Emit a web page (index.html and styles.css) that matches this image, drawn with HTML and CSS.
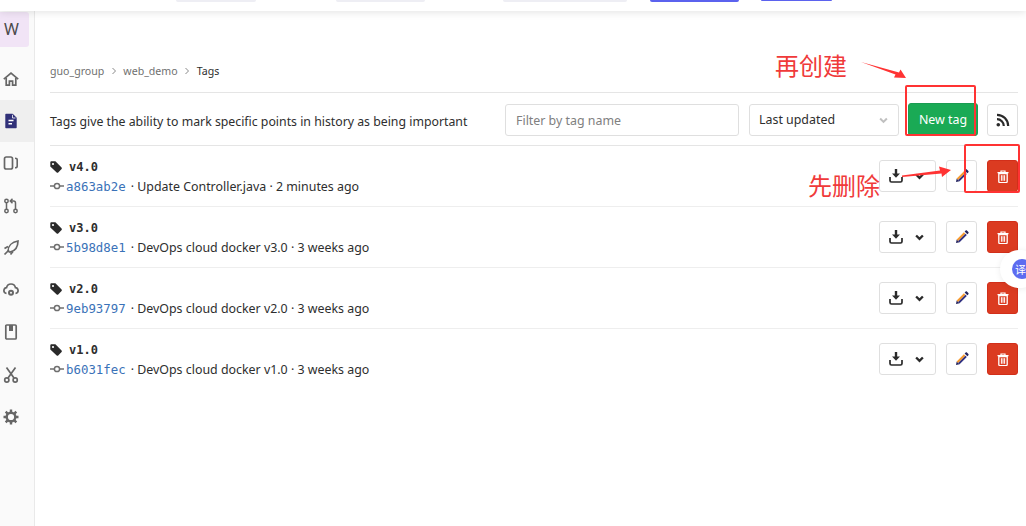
FILE: index.html
```html
<!DOCTYPE html>
<html lang="en">
<head>
<meta charset="utf-8">
<title>Tags</title>
<link rel="stylesheet" href="styles.css">
</head>
<body>
<svg width="0" height="0" class="defs">
  <symbol id="tag" viewBox="0 0 12 12"><path d="M0.300 1.500c0-.7.500-1.200 1.200-1.200h3.900l6.200 6.200c.4.400.4 1.100 0 1.500l-3.400 3.400c-.4.400-1.100.4-1.500 0L.300 5.400z" fill="#2a2a2a"/><circle cx="3" cy="3" r="1.100" fill="#fff"/></symbol>
  <symbol id="commit" viewBox="0 0 14 8"><path d="M0 4h14" stroke="#6f6f6f" stroke-width="1.500"/><circle cx="7" cy="4" r="2.600" fill="#fff" stroke="#6f6f6f" stroke-width="1.500"/></symbol>
  <symbol id="download" viewBox="0 0 14 14"><path d="M7 0v7" stroke="#2a2a2a" stroke-width="2.400" fill="none"/><path d="M3 4.500h8L7 8.800z" fill="#2a2a2a"/><path d="M1 8v3.500c0 1 .5 1.500 1.500 1.500h9c1 0 1.500-.5 1.500-1.500V8" fill="none" stroke="#2a2a2a" stroke-width="1.700"/></symbol>
  <symbol id="chev" viewBox="0 0 8 6"><path d="M1 1.200l3 3 3-3" fill="none" stroke="#2a2a2a" stroke-width="2.100"/></symbol>
  <symbol id="pencil" viewBox="0 0 14 14"><path d="M1 13l.7-3.600 2.900 2.900z" fill="#24245e"/><path d="M1.700 9.400L8.900 2.200l1.500 1.500-7.200 7.200z" fill="#f79a2e"/><path d="M3.200 10.900L10.400 3.700l1.400 1.400-7.200 7.200z" fill="#2f2f80"/><path d="M9.600 1.500l1.100-1c.4-.3.900-.3 1.200 0l1.500 1.500c.3.300.3.800 0 1.200l-1 1.100z" fill="#24245e"/></symbol>
  <symbol id="trash" viewBox="0 0 12 13"><path d="M0.500 2.600h11M4 2.400V1h4v1.400" fill="none" stroke="#fff" stroke-width="1.200"/><path d="M1.800 3.600h8.400v8c0 .6-.4 1-1 1H2.800c-.6 0-1-.4-1-1z" fill="none" stroke="#fff" stroke-width="1.300"/><path d="M4.400 5.200v5.600M6 5.200v5.600M7.600 5.200v5.600" stroke="#fff" stroke-width="1"/></symbol>
</svg>

<header class="topbar">
  <span class="ghost g1"></span><span class="ghost g2"></span><span class="ghost g3"></span>
  <span class="ghost blue b1"></span><span class="ghost blue b2"></span>
</header>

<div class="shell">
  <nav class="sidebar">
    <div class="tile">W</div>
    <a class="item"><svg viewBox="0 0 16 16"><path d="M.8 8.200L8 2l7.200 6.200" fill="none" stroke="#666" stroke-width="1.700"/><path d="M3.200 7v7.200h3.200v-4h3.200v4h3.200V7" fill="none" stroke="#666" stroke-width="1.700"/></svg></a>
    <a class="item active"><svg viewBox="0 0 16 16"><path d="M3 1.500h6.500L13 5v9.500H3z" fill="#303078" stroke="#303078" stroke-width="1.400" stroke-linejoin="round"/><path d="M5.500 7.500h5M5.500 10.800h3.500" stroke="#fff" stroke-width="1.400"/><path d="M9.500 1.800v3.200h3" stroke="#fff" stroke-width=".8" fill="none"/></svg></a>
    <a class="item"><svg viewBox="0 0 16 16"><rect x="1.500" y="2" width="8" height="12" rx="1.800" fill="none" stroke="#666" stroke-width="1.700"/><path d="M12 3.200c1.300 0 2.200.5 2.200 1.500v6.600c0 1-.9 1.500-2.200 1.500" fill="none" stroke="#666" stroke-width="1.600"/></svg></a>
    <a class="item"><svg viewBox="0 0 16 16"><circle cx="3.500" cy="3" r="1.700" fill="none" stroke="#666" stroke-width="1.500"/><circle cx="3.500" cy="13" r="1.700" fill="none" stroke="#666" stroke-width="1.500"/><circle cx="12.500" cy="13" r="1.700" fill="none" stroke="#666" stroke-width="1.500"/><path d="M3.500 4.700v6.600M12.500 11.300V5c0-1-.5-2-2-2H8m1.500-2.200L7.300 3l2.200 2.200" fill="none" stroke="#666" stroke-width="1.500"/></svg></a>
    <a class="item"><svg viewBox="0 0 16 16"><path d="M5 11.200C5 6 9 2 15 1c0 6-3 10-8 11.200z" fill="none" stroke="#666" stroke-width="1.700"/><path d="M1.500 8.500L5 6.500M7.500 14.500l2.500-3M1.500 14.500L6 10" stroke="#666" stroke-width="1.700"/></svg></a>
    <a class="item"><svg viewBox="0 0 16 16"><path d="M3.500 11.500C1.500 11 .7 9.500 1 8c.3-1.500 1.500-2.300 2.500-2.300C4 3.500 6 2 8 2s4 1.500 4.500 3.700c1 0 2.200.8 2.500 2.300.3 1.500-.5 3-2.500 3.500" fill="none" stroke="#666" stroke-width="1.700"/><circle cx="8" cy="10.800" r="3" fill="#666"/><circle cx="8" cy="10.800" r="1" fill="#fafafa"/></svg></a>
    <a class="item"><svg viewBox="0 0 16 16"><rect x="2.800" y="1" width="10.400" height="14" rx="1" fill="none" stroke="#666" stroke-width="1.700"/><path d="M6 1h4v6H6z" fill="#666"/></svg></a>
    <a class="item"><svg viewBox="0 0 16 16"><path d="M3.500 .5l7.500 10.500M12.500 .5L5 11" stroke="#666" stroke-width="1.700"/><circle cx="3.800" cy="13" r="2.100" fill="none" stroke="#666" stroke-width="1.700"/><circle cx="12.200" cy="13" r="2.100" fill="none" stroke="#666" stroke-width="1.700"/></svg></a>
    <a class="item"><svg viewBox="0 0 16 16"><circle cx="8" cy="8" r="4.300" fill="none" stroke="#666" stroke-width="2.400"/><path d="M8 .5v3M8 12.500v3M.5 8h3M12.500 8h3M2.700 2.700l2.100 2.100M11.200 11.200l2.100 2.100M2.700 13.300l2.100-2.100M11.200 4.800l2.100-2.100" stroke="#666" stroke-width="2.400"/></svg></a>
  </nav>

  <main class="content">
    <div class="crumbs">
      <a>guo_group</a><svg class="sep" viewBox="0 0 6 8"><path d="M1.500 1l3 3-3 3" fill="none" stroke="#8a8a8a"/></svg>
      <a>web_demo</a><svg class="sep" viewBox="0 0 6 8"><path d="M1.500 1l3 3-3 3" fill="none" stroke="#8a8a8a"/></svg>
      <b>Tags</b>
    </div>

    <div class="toolbar">
      <p class="intro">Tags give the ability to mark specific points in history as being important</p>
      <div class="filter">Filter by tag name</div>
      <div class="sort"><span>Last updated</span><svg class="sortchev" viewBox="0 0 8 6"><path d="M1 1.200l3 3 3-3" fill="none" stroke="#c0c0c0" stroke-width="1.800"/></svg></div>
      <button class="new">New tag</button>
      <button class="btn rss"><svg viewBox="0 0 14 14"><circle cx="2.300" cy="11.700" r="1.800" fill="#2a2a2a"/><path d="M1 6.200a6.800 6.800 0 0 1 6.800 6.800M1 1.800A11.200 11.200 0 0 1 12.200 13" fill="none" stroke="#2a2a2a" stroke-width="2.200"/></svg></button>
    </div>

    <ul class="tags">
      <li class="row">
        <div class="info">
          <div class="name"><svg class="tagicon"><use href="#tag"/></svg><b>v4.0</b></div>
          <div class="meta"><svg class="commit"><use href="#commit"/></svg><a>a863ab2e</a><span>· Update Controller.java · 2 minutes ago</span></div>
        </div>
        <div class="actions">
          <button class="btn dl"><svg class="i14"><use href="#download"/></svg><svg class="i8"><use href="#chev"/></svg></button>
          <button class="btn edit"><svg class="i14"><use href="#pencil"/></svg></button>
          <button class="btn del"><svg class="i13"><use href="#trash"/></svg></button>
        </div>
      </li>
      <li class="row">
        <div class="info">
          <div class="name"><svg class="tagicon"><use href="#tag"/></svg><b>v3.0</b></div>
          <div class="meta"><svg class="commit"><use href="#commit"/></svg><a>5b98d8e1</a><span>· DevOps cloud docker v3.0 · 3 weeks ago</span></div>
        </div>
        <div class="actions">
          <button class="btn dl"><svg class="i14"><use href="#download"/></svg><svg class="i8"><use href="#chev"/></svg></button>
          <button class="btn edit"><svg class="i14"><use href="#pencil"/></svg></button>
          <button class="btn del"><svg class="i13"><use href="#trash"/></svg></button>
        </div>
      </li>
      <li class="row">
        <div class="info">
          <div class="name"><svg class="tagicon"><use href="#tag"/></svg><b>v2.0</b></div>
          <div class="meta"><svg class="commit"><use href="#commit"/></svg><a>9eb93797</a><span>· DevOps cloud docker v2.0 · 3 weeks ago</span></div>
        </div>
        <div class="actions">
          <button class="btn dl"><svg class="i14"><use href="#download"/></svg><svg class="i8"><use href="#chev"/></svg></button>
          <button class="btn edit"><svg class="i14"><use href="#pencil"/></svg></button>
          <button class="btn del"><svg class="i13"><use href="#trash"/></svg></button>
        </div>
      </li>
      <li class="row last">
        <div class="info">
          <div class="name"><svg class="tagicon"><use href="#tag"/></svg><b>v1.0</b></div>
          <div class="meta"><svg class="commit"><use href="#commit"/></svg><a>b6031fec</a><span>· DevOps cloud docker v1.0 · 3 weeks ago</span></div>
        </div>
        <div class="actions">
          <button class="btn dl"><svg class="i14"><use href="#download"/></svg><svg class="i8"><use href="#chev"/></svg></button>
          <button class="btn edit"><svg class="i14"><use href="#pencil"/></svg></button>
          <button class="btn del"><svg class="i13"><use href="#trash"/></svg></button>
        </div>
      </li>
    </ul>
  </main>
</div>

<div class="note note-create">再创建</div>
<div class="note note-delete">先删除</div>
<div class="redbox box-create"></div>
<div class="redbox box-delete"></div>
<svg class="arrows" viewBox="0 0 1026 526">
  <path d="M861 62L899 72.500 900.500 69.500 906 78 894 77.500 895.500 74.500z" fill="#f33"/>
  <path d="M902 175.500L940 170.500 939 166.500 951 170 942 177 941.500 173.500 902 177z" fill="#f33"/>
</svg>
<div class="translate"><span class="bubble">译</span></div>
</body>
</html>
```

FILE: styles.css
```css
* { box-sizing: border-box; }
html, body { margin: 0; height: 100%; overflow: hidden; }
body {
  position: relative;
  background: #fff;
  color: #2e2e2e;
  font-family: "Noto Sans", "Noto Sans CJK SC", sans-serif;
  font-size: 12px;
}
.defs { position: absolute; }
.topbar {
  height: 11px;
  background: #fff;
  box-shadow: 0 1px 8px rgba(0, 0, 0, .12);
  position: relative;
  z-index: 2;
  display: flex;
  align-items: flex-start;
}
.ghost { height: 2px; background: #eeeef4; border-radius: 0 0 4px 4px; flex: none; }
.g1 { width: 80px; margin-left: 176px; }
.g2 { width: 89px; margin-left: 80px; }
.g3 { width: 124px; margin-left: 78px; }
.blue { background: #5b62ee; }
.b1 { width: 89px; margin-left: 23px; }
.b2 { width: 71px; margin-left: 22px; height: 1px; }

.shell { display: flex; height: 515px; }
.sidebar {
  width: 35px;
  flex: none;
  background: #fafafa;
  border-right: 1px solid #e9e9e9;
  padding-top: 1px;
}
.tile {
  width: 29px;
  height: 35px;
  background: #f1e4f6;
  border-radius: 0 3px 3px 0;
  color: #4a4a4a;
  font-size: 16px;
  line-height: 34px;
  text-align: center;
  padding-right: 6px;
  margin-bottom: 10.500px;
}
.item { display: flex; height: 42.3px; width: 34px; padding-right: 12px; align-items: center; justify-content: center; }
.item svg { width: 16px; height: 16px; }
.active { background: #efefef; }

.content { flex: 1; min-width: 0; padding: 0 8px 0 15px; }
.crumbs {
  display: flex;
  align-items: center;
  height: 82px;
  padding-top: 38px;
  border-bottom: 1px solid #e5e5e5;
  font-size: 10.6px;
  color: #707070;
}
.crumbs b { font-weight: 400; color: #2e2e2e; }
.sep { width: 6px; height: 8px; margin: 0 6.500px; }
.toolbar {
  display: flex;
  align-items: center;
  height: 53px;
  border-bottom: 1px solid #e5e5e5;
  padding-top: 1px;
}
.intro { margin: 4px 0 0; flex: 1; font-size: 12.3px; }
.filter {
  width: 234px;
  height: 32px;
  border: 1px solid #dfdfdf;
  border-radius: 3px;
  padding-left: 10px;
  line-height: 31px;
  color: #808080;
  font-size: 12.4px;
}
.sort {
  width: 150px;
  height: 32px;
  margin-left: 10px;
  border: 1px solid #dfdfdf;
  border-radius: 3px;
  padding: 0 10px 0 9px;
  display: flex;
  align-items: center;
  justify-content: space-between;
  font-size: 12.4px;
}
.sortchev { width: 9px; height: 7px; margin-top: 1px; }
.new {
  width: 70px;
  height: 33px;
  margin-left: 9px;
  border: 1px solid #1a9c52;
  border-radius: 3px;
  background: #1aaa55;
  color: #fff;
  font: inherit;
  font-size: 12.4px;
  padding: 0;
}
.btn {
  display: flex;
  align-items: center;
  justify-content: center;
  height: 32px;
  padding: 0;
  background: #fff;
  border: 1px solid #dfdfdf;
  border-radius: 3px;
}
.rss { width: 31px; margin-left: 9px; }
.rss svg { width: 14px; height: 14px; }
.tags { list-style: none; margin: 0; padding: 0; }
.row {
  display: flex;
  justify-content: space-between;
  height: 61px;
  border-bottom: 1px solid #eeeeee;
  padding-top: 13px;
}
.last { border-bottom: 0; }
.name { display: flex; align-items: center; height: 15px; }
.tagicon { width: 12px; height: 12px; margin-right: 7px; }
.name b { font-family: "DejaVu Sans Mono", monospace; font-size: 12px; }
.meta { display: flex; align-items: center; margin-top: 4px; font-size: 12.4px; height: 16px; white-space: pre; }
.commit { width: 14px; height: 8px; margin-right: 2px; }
.meta a { font-family: "DejaVu Sans Mono", monospace; font-size: 12.4px; color: #3a72b8; margin-right: 5px; }
.actions { display: flex; gap: 10px; margin-top: 1px; }
.dl { width: 57px; gap: 12px; justify-content: flex-start; padding-left: 9px; }
.edit { width: 31px; }
.del { width: 31px; background: #db3b21; border-color: #d22f1a; }
.i14 { width: 14px; height: 14px; }
.i8 { width: 9px; height: 7px; }
.i13 { width: 12px; height: 13px; }

.note {
  position: absolute;
  color: #f03a3a;
  font-family: "Noto Sans CJK SC", sans-serif;
  font-size: 24px;
  line-height: 30px;
  white-space: nowrap;
}
.note-create { left: 775px; top: 50px; }
.note-delete { left: 808px; top: 170px; }
.redbox { position: absolute; border: 2px solid #f33; border-radius: 2px; }
.box-create { left: 905px; top: 85px; width: 71px; height: 51px; }
.box-delete { left: 964px; top: 144px; width: 56px; height: 49px; }
.arrows { position: absolute; left: 0; top: 0; width: 1026px; height: 526px; pointer-events: none; }
.translate {
  position: absolute;
  left: 1000px;
  top: 250px;
  width: 40px;
  height: 38px;
  border-radius: 19px;
  background: #fff;
  box-shadow: 0 1px 6px rgba(0, 0, 0, .08);
  padding: 9px 0 0 12px;
}
.bubble {
  display: block;
  width: 20px;
  height: 20px;
  border-radius: 50%;
  background: #5d6cf0;
  color: #fff;
  font-family: "Noto Sans CJK SC", sans-serif;
  font-size: 11px;
  line-height: 20px;
  padding-left: 3px;
}
```
